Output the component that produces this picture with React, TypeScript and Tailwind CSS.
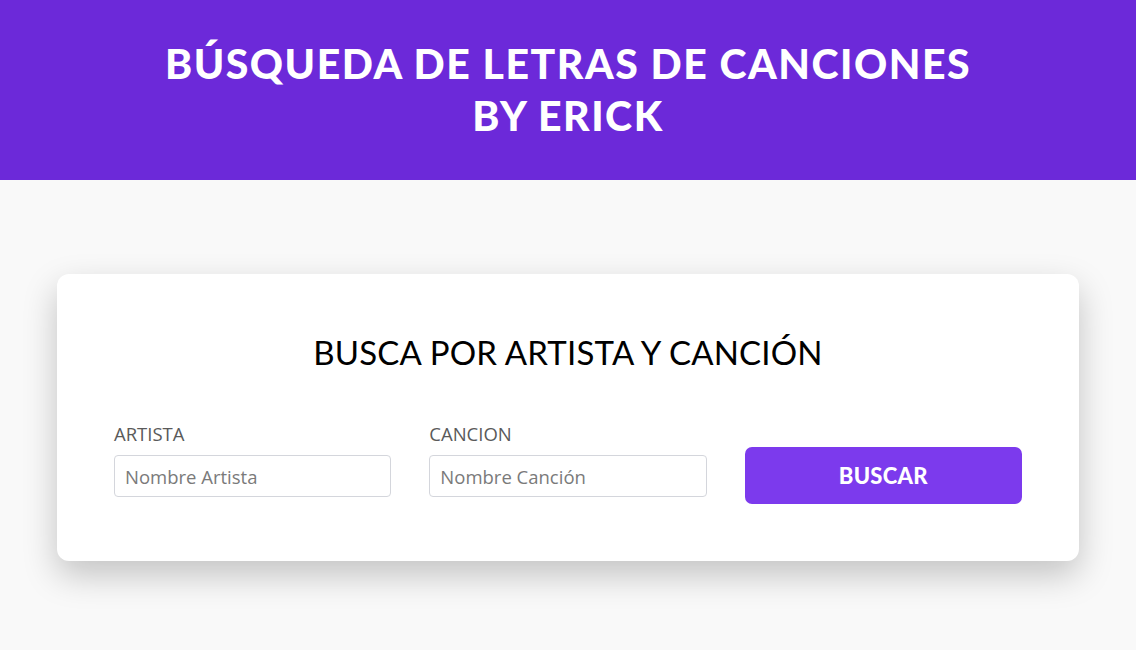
import React from 'react';

export default function App() {
  return (
    <div className="min-h-screen bg-[#f9f9f9] font-['Open_Sans',sans-serif]">
      <header className="bg-[#6c29d9] h-[180px] flex items-center justify-center">
        <h1 className="text-center text-white font-['Lato',sans-serif] font-black text-[41px] leading-[52px] tracking-[1.5px] whitespace-nowrap">
          BÚSQUEDA DE LETRAS DE CANCIONES
          <br />
          BY ERICK
        </h1>
      </header>

      <main className="pt-[94px] pb-16">
        <div className="mx-auto w-[1022px] bg-white rounded-xl shadow-[0_14px_34px_rgba(0,0,0,0.22)] px-[57px] pt-[58px] pb-[57px]">
          <h2 className="text-center text-black font-['Lato',sans-serif] font-normal text-[33px] leading-[40px] tracking-[0.2px]">
            BUSCA POR ARTISTA Y CANCIÓN
          </h2>

          <form className="mt-[50px] grid grid-cols-3 gap-[38px] items-end" onSubmit={(e) => e.preventDefault()}>
            <div className="flex flex-col">
              <label className="text-[18.5px] leading-[24px] text-[#5a5a5a] mb-[9px]">ARTISTA</label>
              <input
                type="text"
                placeholder="Nombre Artista"
                className="h-[42px] border border-[#d4d6dc] rounded-[4px] px-[10px] text-[18.5px] text-[#333] placeholder:text-[#7a7a7a] outline-none mb-[7px]"
              />
            </div>
            <div className="flex flex-col">
              <label className="text-[18.5px] leading-[24px] text-[#5a5a5a] mb-[9px]">CANCION</label>
              <input
                type="text"
                placeholder="Nombre Canción"
                className="h-[42px] border border-[#d4d6dc] rounded-[4px] px-[10px] text-[18.5px] text-[#333] placeholder:text-[#7a7a7a] outline-none mb-[7px]"
              />
            </div>
            <button
              type="submit"
              className="h-[57px] bg-[#7c3aed] rounded-[7px] text-white font-['Lato',sans-serif] font-black text-[22px] tracking-[0.3px]"
            >
              BUSCAR
            </button>
          </form>
        </div>
      </main>
    </div>
  );
}
